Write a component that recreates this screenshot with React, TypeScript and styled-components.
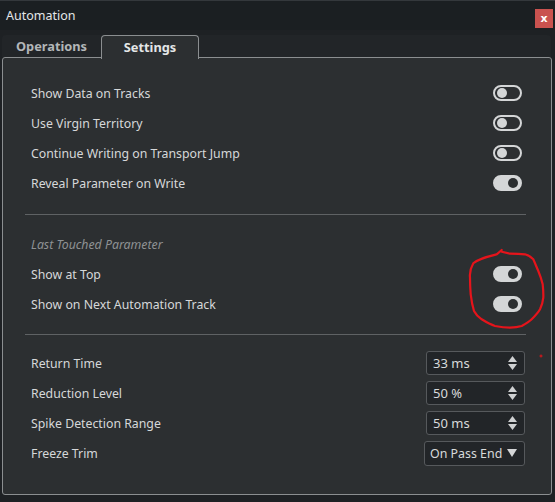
import { useState } from 'react'
import styled, { createGlobalStyle } from 'styled-components'

const GlobalStyle = createGlobalStyle`
    html, body {
        margin: 0;
        padding: 0;
        background: #1e2124;
    }
    body {
        font-family: 'Noto Sans', 'Open Sans', sans-serif;
        -webkit-font-smoothing: antialiased;
    }
`

const Window = styled.div`
    position: relative;
    width: 555px;
    height: 502px;
    display: flex;
    flex-direction: column;
    background: #1e2124;
    border-top: 1px solid #34383c;
    box-sizing: border-box;
    overflow: hidden;
`

const TitleBar = styled.div`
    height: 29px;
    display: flex;
    align-items: center;
    justify-content: space-between;
    padding: 0 2px 0 6px;
    background: #1b1f22;
    color: #e4e6e8;
    font-size: 12.5px;
`

const CloseButton = styled.button`
    width: 18px;
    height: 19px;
    margin-top: 6px;
    border: none;
    padding: 0;
    background: #c9524f;
    color: #ffffff;
    font-family: 'DejaVu Sans', sans-serif;
    font-weight: bold;
    font-size: 11px;
    line-height: 17px;
    cursor: pointer;
`

const TabBar = styled.div`
    height: 22px;
    margin: 5px 4px 0 2px;
    display: flex;
    align-items: stretch;
    background: #222528;
    border-radius: 4px 4px 0 0;
`

const Tab = styled.div<{ active?: boolean }>`
    width: ${({ active }) => (active ? '96px' : '99px')};
    display: flex;
    align-items: center;
    justify-content: center;
    font-size: 12.8px;
    font-weight: 700;
    color: ${({ active }) => (active ? '#e4e6e7' : '#b3b6b8')};
    background: ${({ active }) => (active ? '#2c2f31' : 'transparent')};
    border: ${({ active }) => (active ? '1.5px solid #8b8e90' : 'none')};
    border-bottom: none;
    border-radius: 4px 4px 0 0;
    margin-bottom: ${({ active }) => (active ? '-2px' : '0')};
    position: relative;
    z-index: 1;
    padding-bottom: 1px;
`

const Panel = styled.div`
    flex: 1;
    margin: 0 3px 7px 2px;
    padding: 20px 25px 0 22px;
    background: #2c2f31;
    border: 1.5px solid #8b8e90;
    border-radius: 3px;
    display: flex;
    flex-direction: column;
`

const Row = styled.div`
    height: 30px;
    display: flex;
    align-items: center;
    justify-content: space-between;
    padding: 0 4px 0 6px;
    color: #d6d8d9;
    font-size: 12.3px;
    white-space: nowrap;
`

const Heading = styled(Row)`
    font-style: italic;
    color: #8f9294;
`

const Divider = styled.div<{ tight?: boolean }>`
    height: 1px;
    background: #5f6264;
    margin: ${({ tight }) => (tight ? '15px 0 13px' : '16px 0 14px')};
`

const ToggleTrack = styled.button<{ on: boolean }>`
    width: 29px;
    height: 16px;
    padding: 0 2px;
    border-radius: 8px;
    box-sizing: border-box;
    display: flex;
    align-items: center;
    justify-content: ${({ on }) => (on ? 'flex-end' : 'flex-start')};
    border: 2px solid #d4d6d7;
    background: ${({ on }) => (on ? '#d4d6d7' : 'transparent')};
    cursor: pointer;
`

const ToggleKnob = styled.span<{ on: boolean }>`
    width: 10px;
    height: 10px;
    border-radius: 50%;
    background: ${({ on }) => (on ? '#2a2d2f' : '#d4d6d7')};
`

const Field = styled.div<{ wide?: boolean }>`
    width: ${({ wide }) => (wide ? '101px' : '99px')};
    height: ${({ wide }) => (wide ? '25px' : '24px')};
    margin-right: -3px;
    box-sizing: border-box;
    display: flex;
    align-items: center;
    justify-content: space-between;
    padding: ${({ wide }) => (wide ? '0 7px 0 5px' : '0 7px 0 6px')};
    background: #222528;
    border: 1px solid #56595c;
    border-radius: 3px;
    color: #d8dadb;
    font-size: ${({ wide }) => (wide ? '12.4px' : '13px')};
    white-space: nowrap;
`

const Arrows = styled.div`
    display: flex;
    flex-direction: column;
    gap: 2px;
`

const Overlay = styled.svg`
    position: absolute;
    left: 0;
    top: 0;
    pointer-events: none;
`

const Toggle = ({ initial }: { initial: boolean }) => {
    const [on, setOn] = useState(initial)
    return (
        <ToggleTrack on={on} onClick={() => setOn(!on)}>
            <ToggleKnob on={on} />
        </ToggleTrack>
    )
}

const Spinner = ({ value }: { value: string }) => (
    <Field>
        <span>{value}</span>
        <Arrows>
            <svg width='9' height='6' viewBox='0 0 9 6'>
                <path d='M4.5 0 L9 6 L0 6 Z' fill='#cfd1d2' />
            </svg>
            <svg width='9' height='6' viewBox='0 0 9 6'>
                <path d='M0 0 L9 0 L4.5 6 Z' fill='#cfd1d2' />
            </svg>
        </Arrows>
    </Field>
)

const general = [
    { label: 'Show Data on Tracks', on: false },
    { label: 'Use Virgin Territory', on: false },
    { label: 'Continue Writing on Transport Jump', on: false },
    { label: 'Reveal Parameter on Write', on: true },
]

const lastTouched = [
    { label: 'Show at Top', on: true },
    { label: 'Show on Next Automation Track', on: true },
]

const timing = [
    { label: 'Return Time', value: '33 ms' },
    { label: 'Reduction Level', value: '50 %' },
    { label: 'Spike Detection Range', value: '50 ms' },
]

export default function App() {
    return (
        <>
            <GlobalStyle />
            <Window>
                <TitleBar>
                    <span>Automation</span>
                    <CloseButton type='button'>x</CloseButton>
                </TitleBar>
                <TabBar>
                    <Tab>Operations</Tab>
                    <Tab active>Settings</Tab>
                </TabBar>
                <Panel>
                    {general.map((item) => (
                        <Row key={item.label}>
                            {item.label}
                            <Toggle initial={item.on} />
                        </Row>
                    ))}
                    <Divider />
                    <Heading>Last Touched Parameter</Heading>
                    {lastTouched.map((item) => (
                        <Row key={item.label}>
                            {item.label}
                            <Toggle initial={item.on} />
                        </Row>
                    ))}
                    <Divider tight />
                    {timing.map((item) => (
                        <Row key={item.label}>
                            {item.label}
                            <Spinner value={item.value} />
                        </Row>
                    ))}
                    <Row>
                        Freeze Trim
                        <Field wide>
                            <span>On Pass End</span>
                            <svg width='10' height='8' viewBox='0 0 10 8'>
                                <path d='M0 0 L10 0 L5 8 Z' fill='#d4d6d7' />
                            </svg>
                        </Field>
                    </Row>
                </Panel>
                <Overlay width='555' height='502' viewBox='0 0 555 502'>
                    <path
                        d='M501.7 249 L496.7 253.3 C486 256 478 258 473.3 262.3 C470 268 469.5 272 470 276.7 C470 284 470.3 288 470.7 293.3 C471.5 300 472.5 305 474 310 C476 314 479 316.5 481.7 318.3 C486 321 490 323.5 495 325 C500 326 505 326.7 510 326.7 C514 326.5 518 326 521.7 325 C525.5 323 529 321 531.7 318.3 C535 315 538 312 540 308.3 C542 304 543 300 543.3 296.7 C543.5 292 543.2 288 542.7 283.3 C541.5 278.5 540 274 538.3 270 C536.5 266 535 262 533.3 258.3 C530.5 255.5 528 254 525 253.3 C520 252.8 515 252.7 510 252.7 L501.7 250.7'
                        fill='none'
                        stroke='#e5141b'
                        strokeWidth='2.2'
                        strokeLinejoin='round'
                        strokeLinecap='round'
                    />
                    <path d='M539.5 355 H542.5 M541 353.5 V356.5' stroke='#e5141b' strokeWidth='1' />
                </Overlay>
            </Window>
        </>
    )
}
